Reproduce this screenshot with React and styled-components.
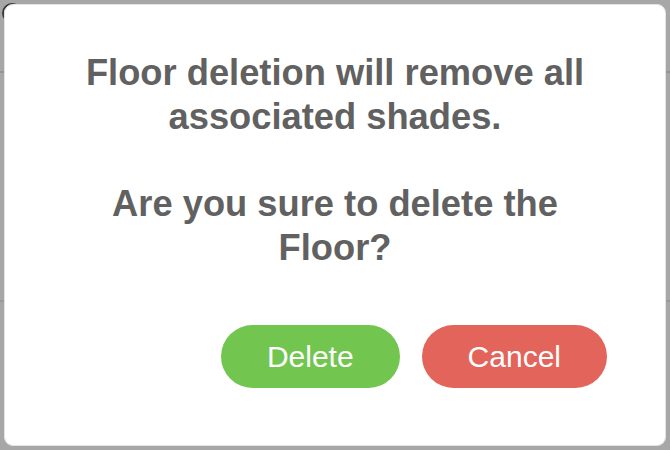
import React from "react";
import styled, { createGlobalStyle } from "styled-components";

const GlobalStyle = createGlobalStyle`
  html, body {
    margin: 0;
    padding: 0;
    width: 670px;
    height: 450px;
    overflow: hidden;
  }
`;

const Backdrop = styled.div`
  position: relative;
  box-sizing: border-box;
  width: 670px;
  height: 450px;
  padding: 4px;
  background-color: #a7a7a7;
  background-image: linear-gradient(#949494, #949494),
    linear-gradient(#9a9a9a, #9a9a9a);
  background-repeat: no-repeat;
  background-size: 100% 2px, 100% 2px;
  background-position: 0 71px, 0 300px;
  font-family: "Liberation Sans", Arial, Helvetica, sans-serif;
`;

const BehindIcon = styled.svg`
  position: absolute;
  left: 0;
  top: 0;
`;

const Modal = styled.div`
  position: relative;
  box-sizing: border-box;
  width: 662px;
  height: 442px;
  background: #ffffff;
  border: 1px solid #e4e4e4;
  border-radius: 9px;
  padding: 46px 58px 0 0;
  display: flex;
  flex-direction: column;
`;

const Message = styled.p`
  margin: 0 0 ${(p) => p.$gap || 0}px 0;
  padding-left: 58px;
  font-size: 36.3px;
  line-height: 44px;
  font-weight: 700;
  color: #616161;
  text-align: center;
`;

const Actions = styled.div`
  display: flex;
  justify-content: flex-end;
  gap: 22px;
  margin-top: 55px;
`;

const Button = styled.button`
  height: 63px;
  padding: 0 46px;
  border: none;
  border-radius: 32px;
  background-color: ${(p) => (p.$danger ? "#e3645b" : "#72c650")};
  color: #ffffff;
  font-family: "Liberation Sans", Arial, Helvetica, sans-serif;
  font-size: 30px;
  font-weight: 400;
  cursor: pointer;
`;

const App = () => (
  <>
    <GlobalStyle />
    <Backdrop>
      <BehindIcon width="24" height="24" viewBox="0 0 24 24">
        <circle cx="12" cy="13" r="9" fill="none" stroke="#3a3a3a" strokeWidth="2" />
      </BehindIcon>
      <Modal>
        <Message $gap={43}>
          Floor deletion will remove all
          <br />
          associated shades.
        </Message>
        <Message>
          Are you sure to delete the
          <br />
          Floor?
        </Message>
        <Actions>
          <Button>Delete</Button>
          <Button $danger>Cancel</Button>
        </Actions>
      </Modal>
    </Backdrop>
  </>
);

export default App;
